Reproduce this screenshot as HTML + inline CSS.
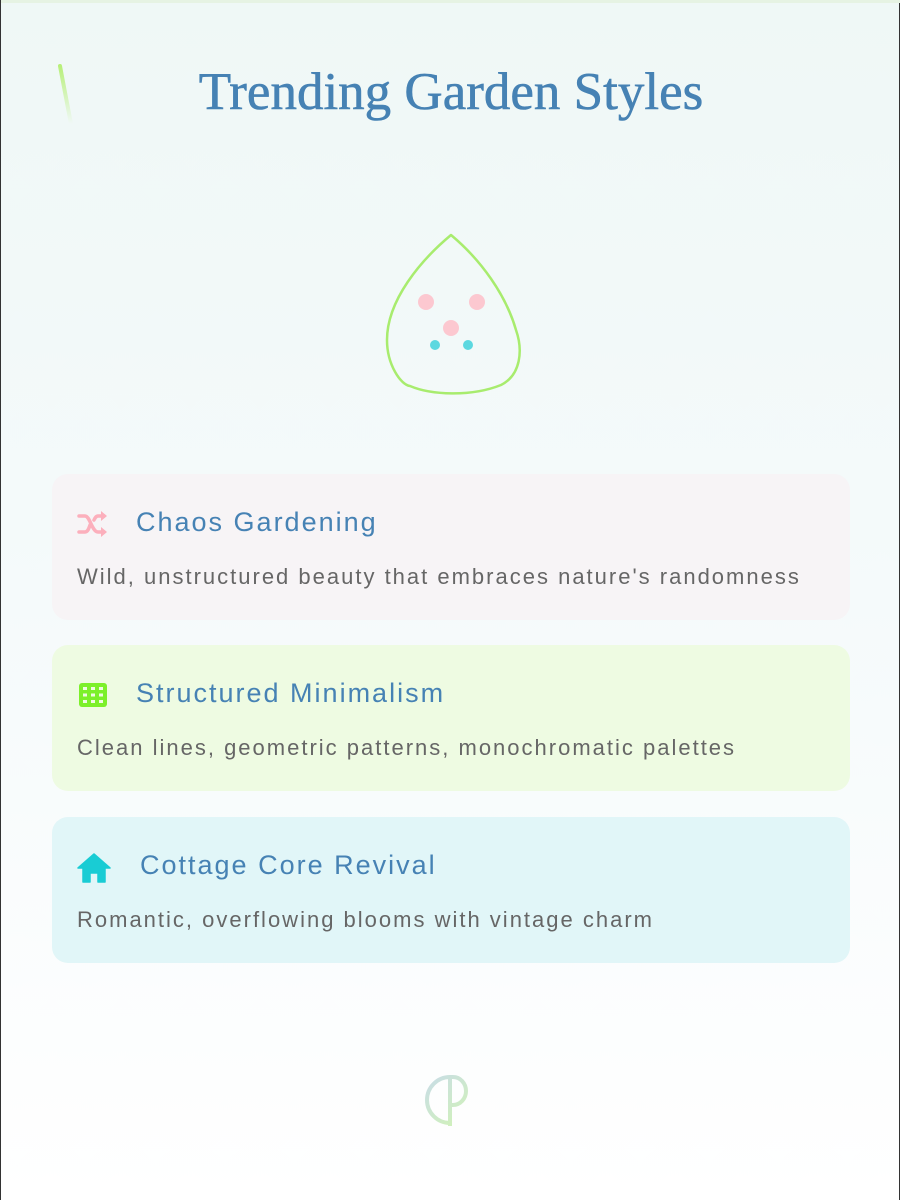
<!DOCTYPE html>
<html><head><meta charset="utf-8"><style>
*{margin:0;padding:0;box-sizing:border-box}
html,body{width:900px;height:1200px;overflow:hidden}
body{background:linear-gradient(180deg,#eff8f6 0%,#f5fafb 50%,#ffffff 100%);font-family:"Liberation Sans",sans-serif;position:relative;border-left:1px solid #333;border-right:1px solid #333;}
.top{position:absolute;left:0;top:0;width:900px;height:3px;background:#e6f3e3}
h1{position:absolute;top:62px;left:0;width:900px;text-align:center;font-family:"Liberation Serif",serif;font-weight:normal;font-size:53px;color:#4682b4;-webkit-text-stroke:0.6px #4682b4}
.card{position:absolute;left:51px;width:798px;height:146px;border-radius:16px}
.card h2{position:absolute;left:84px;top:33px;font-weight:normal;font-size:27px;color:#4682b4;letter-spacing:2px}
.card p{position:absolute;left:25px;top:90px;font-size:22px;color:#666;letter-spacing:2px}
.ic{position:absolute;left:25px;top:36px}
</style></head><body>
<div class="top"></div>
<svg style="position:absolute;left:50px;top:60px" width="30" height="70"><defs><linearGradient id="st" gradientUnits="userSpaceOnUse" x1="0" y1="6" x2="0" y2="64"><stop offset="0" stop-color="#b8f07a"/><stop offset="1" stop-color="#b8f07a" stop-opacity="0"/></linearGradient></defs><path d="M9,6 L20,64" stroke="url(#st)" stroke-width="4" stroke-linecap="round"/></svg>
<h1>Trending Garden Styles</h1>
<svg style="position:absolute;left:0;top:0" width="900" height="420">
<path d="M450,235 C420,260 386,300 386,340 C386,365 400,385 409,386 C430,395 470,397 500,385 C520,375 522,350 515,330 C505,295 480,260 450,235 Z" fill="none" stroke="#a8ec6e" stroke-width="2.5" stroke-linejoin="round"/>
<circle cx="425" cy="302" r="8" fill="#fcc8d0"/><circle cx="476" cy="302" r="8" fill="#fcc8d0"/><circle cx="450" cy="328" r="8" fill="#fcc8d0"/>
<circle cx="434" cy="345" r="5" fill="#5cd8e0"/><circle cx="467" cy="345" r="5" fill="#5cd8e0"/>
</svg>
<div class="card" style="top:474px;background:#f7f4f6">
<svg class="ic" width="32" height="28" viewBox="0 0 32 28"><g fill="none" stroke="#fcafbc" stroke-width="3.5" stroke-linecap="round"><path d="M2,6 H8 C13,6 15,22 21,22 H27"/><path d="M2,22 H8 C11,22 12,18 13,15"/><path d="M17,10 C18,8 19,6 21,6 H27"/></g><path d="M24,1 L30,6 L24,11Z M24,17 L30,22 L24,27Z" fill="#fcafbc"/></svg>
<h2>Chaos Gardening</h2><p>Wild, unstructured beauty that embraces nature's randomness</p></div>
<div class="card" style="top:645px;background:#eefbe2">
<svg class="ic" width="32" height="28" viewBox="0 0 30 28"><rect x="1" y="2" width="28" height="24" rx="3" fill="#7cf02a"/><g fill="#eefbe2"><rect x="5" y="6" width="4" height="3"/><rect x="13" y="6" width="4" height="3"/><rect x="21" y="6" width="4" height="3"/><rect x="5" y="12.5" width="4" height="3"/><rect x="13" y="12.5" width="4" height="3"/><rect x="21" y="12.5" width="4" height="3"/><rect x="5" y="19" width="4" height="3"/><rect x="13" y="19" width="4" height="3"/><rect x="21" y="19" width="4" height="3"/></g></svg>
<h2>Structured Minimalism</h2><p>Clean lines, geometric patterns, monochromatic palettes</p></div>
<div class="card" style="top:817px;background:#e1f6f8">
<svg class="ic" width="34" height="30" viewBox="0 0 34 30"><path d="M17,1 L33,15 H28 V29 H21 V20 H13 V29 H6 V15 H1 Z" fill="#19ccd4" stroke="#19ccd4" stroke-linejoin="round" stroke-width="1.5"/></svg>
<h2 style="left:88px">Cottage Core Revival</h2><p>Romantic, overflowing blooms with vintage charm</p></div>
<svg style="position:absolute;left:420px;top:1070px" width="60" height="60"><defs><linearGradient id="lg" gradientUnits="userSpaceOnUse" x1="5" y1="5" x2="50" y2="55"><stop offset="0" stop-color="#c8dce8"/><stop offset="1" stop-color="#d2f4b4"/></linearGradient></defs><g fill="none" stroke="url(#lg)" stroke-width="4"><path d="M29,7 A23,23 0 0 0 29,53"/><path d="M29,7 V56"/><path d="M29,7 H32 A13,14 0 0 1 32,35 H29"/></g></svg>
</body></html>
